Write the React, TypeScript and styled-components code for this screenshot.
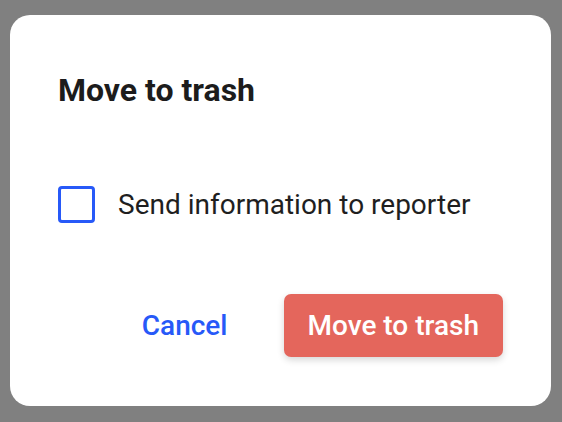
import React from "react";
import styled, { createGlobalStyle } from "styled-components";

const Global = createGlobalStyle`
  html, body {
    margin: 0;
    padding: 0;
    background: #808080;
    font-family: Roboto, "Noto Sans", Arial, sans-serif;
  }
  #root {
    padding: 15px 0 0 10px;
  }
`;

const Dialog = styled.div`
  box-sizing: border-box;
  width: 541px;
  height: 391px;
  background: #ffffff;
  border-radius: 20px;
  padding: 56px 48px 49px 48px;
  display: flex;
  flex-direction: column;
`;

const Title = styled.h2`
  margin: 0;
  font-size: 32px;
  line-height: 38px;
  font-weight: 700;
  color: #1c1c1c;
`;

const CheckRow = styled.label`
  margin-top: 77px;
  display: flex;
  align-items: center;
  gap: 23px;
  height: 37px;
  cursor: pointer;
`;

const Box = styled.span`
  box-sizing: border-box;
  width: 37px;
  height: 37px;
  border: 3px solid #2759f8;
  border-radius: 4px;
  flex: none;
`;

const Label = styled.span`
  font-size: 28px;
  line-height: 36px;
  color: #1f1f1f;
`;

const Footer = styled.div`
  margin-top: auto;
  display: flex;
  justify-content: flex-end;
  align-items: center;
  gap: 56px;
`;

const TextButton = styled.button`
  border: none;
  background: none;
  padding: 0;
  font-family: inherit;
  font-size: 28px;
  font-weight: 500;
  color: #2759f8;
  cursor: pointer;
`;

const PrimaryButton = styled.button`
  box-sizing: border-box;
  height: 63px;
  padding: 0 24px;
  border: none;
  border-radius: 7px;
  background: #e4665c;
  color: #ffffff;
  font-family: inherit;
  font-size: 28px;
  font-weight: 500;
  box-shadow: 0 3px 7px rgba(0, 0, 0, 0.16);
  cursor: pointer;
`;

export default function App() {
  return (
    <>
      <Global />
      <Dialog>
        <Title>Move to trash</Title>
        <CheckRow>
          <Box />
          <Label>Send information to reporter</Label>
        </CheckRow>
        <Footer>
          <TextButton>Cancel</TextButton>
          <PrimaryButton>Move to trash</PrimaryButton>
        </Footer>
      </Dialog>
    </>
  );
}
